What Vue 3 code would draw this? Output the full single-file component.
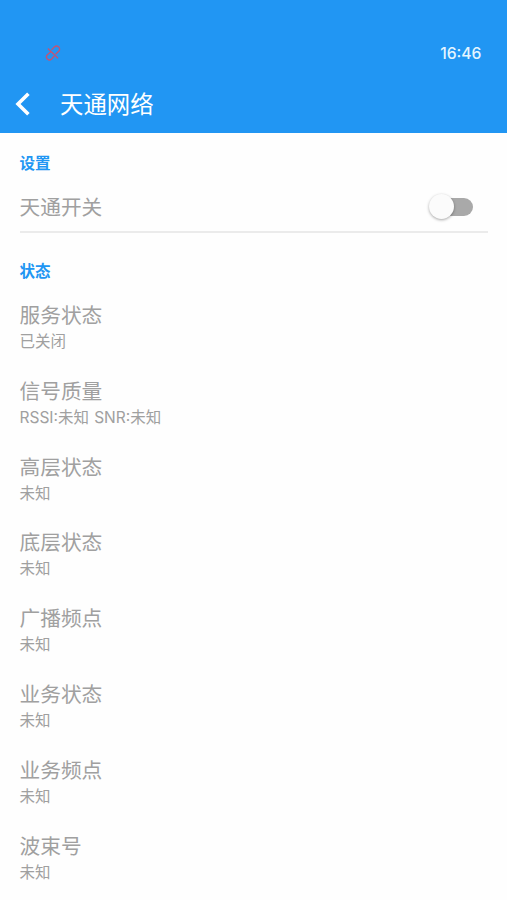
<template>
  <div class="page">
    <header class="header">
      <div class="status-bar">
        <!-- Icono de enlace desconectado -->
        <svg class="unlink-icon" viewBox="0 0 16 16">
          <path d="M5.600 7 2.400 9.800a3 3 0 0 0 0 4.200 3 3 0 0 0 4.200 0l2.600-3" />
          <path d="M10.600 9.300 13.700 6.300a3 3 0 0 0 0-4.300 3.200 3.200 0 0 0-4.400 0L6.500 4.900" />
          <path d="M2.900 3.500 13 13.200" />
        </svg>
        <span class="clock">16:46</span>
      </div>
      <div class="toolbar">
        <button class="back-btn" aria-label="返回">
          <svg class="back-icon" viewBox="0 0 16 24">
            <path d="M13.4 1.7 3 12l10.4 10.3" />
          </svg>
        </button>
        <h1 class="title">天通网络</h1>
      </div>
    </header>

    <section class="settings">
      <h2 class="section-title">设置</h2>
      <div class="switch-row" @click="enabled = !enabled">
        <span class="item-title switch-label">天通开关</span>
        <span class="switch" :class="{ on: enabled }">
          <span class="switch-thumb"></span>
        </span>
      </div>
    </section>

    <section class="status">
      <h2 class="section-title">状态</h2>
      <div v-for="item in items" :key="item.title" class="item">
        <p class="item-title">{{ item.title }}</p>
        <p class="item-value">{{ item.value }}</p>
      </div>
    </section>
  </div>
</template>

<script setup>
import { ref } from 'vue';

const enabled = ref(false);

const items = [
  { title: '服务状态', value: '已关闭' },
  { title: '信号质量', value: 'RSSI:未知 SNR:未知' },
  { title: '高层状态', value: '未知' },
  { title: '底层状态', value: '未知' },
  { title: '广播频点', value: '未知' },
  { title: '业务状态', value: '未知' },
  { title: '业务频点', value: '未知' },
  { title: '波束号', value: '未知' }
];
</script>

<style>
body {
  margin: 0;
  background: #fefefe;
}
</style>

<style scoped>
.page {
  height: 900px;
  overflow: hidden;
  background: #fefefe;
  color: #a0a0a0;
  font-family: Inter, "Noto Sans CJK SC", sans-serif;
}

.header {
  height: 132.5px;
  box-sizing: border-box;
  padding-top: 30px;
  background: #2196f3;
  color: #fff;
}

.status-bar {
  display: flex;
  align-items: center;
  justify-content: space-between;
  height: 46px;
  padding: 0 25.5px 0 45px;
}

.unlink-icon {
  width: 16px;
  height: 16px;
  fill: none;
  stroke: #c65372;
  stroke-width: 1.3;
}

.clock {
  font-size: 15.7px;
  font-weight: 500;
  color: #e4f5ff;
}

.toolbar {
  display: flex;
  align-items: center;
  height: 56px;
}

.back-btn {
  display: flex;
  width: 60px;
  padding: 0 0 0 15px;
  border: none;
  background: none;
  cursor: pointer;
}

.back-icon {
  width: 16px;
  height: 24px;
  fill: none;
  stroke: #fff;
  stroke-width: 3.6;
}

.title {
  margin: 0;
  padding-top: 1px;
  font-size: 23.4px;
  font-weight: 400;
  line-height: 34px;
}

.settings {
  height: 100px;
  box-sizing: border-box;
  margin: 0 19px 0 19.5px;
  padding-top: 19px;
  border-bottom: 2px solid #ebebeb;
}

.section-title {
  margin: 0;
  font-size: 15.5px;
  font-weight: 700;
  line-height: 24px;
  color: #2196f3;
}

.switch-row {
  display: flex;
  align-items: center;
  justify-content: space-between;
  height: 48px;
  margin-top: 7px;
  padding-right: 15px;
}

.switch-label {
  padding-top: 2px;
}

.switch {
  display: flex;
  align-items: center;
  width: 38px;
  height: 18px;
  border-radius: 9px;
  background: #a9a9a9;
}

.switch.on {
  justify-content: flex-end;
  background: #90caf9;
}

.switch-thumb {
  width: 25px;
  height: 25px;
  margin-left: -6px;
  border-radius: 50%;
  background: #fbfbfb;
  box-shadow: 0 1px 3px rgba(0, 0, 0, 0.35);
}

.status {
  padding: 27.5px 19.5px 0;
}

.item {
  height: 75.8px;
  box-sizing: border-box;
  padding-top: 19px;
}

.item-title {
  margin: 0;
  font-size: 20.7px;
  line-height: 26px;
}

.item-value {
  margin: 0;
  font-size: 15.5px;
  line-height: 26px;
  word-spacing: 0.8px;
}
</style>
